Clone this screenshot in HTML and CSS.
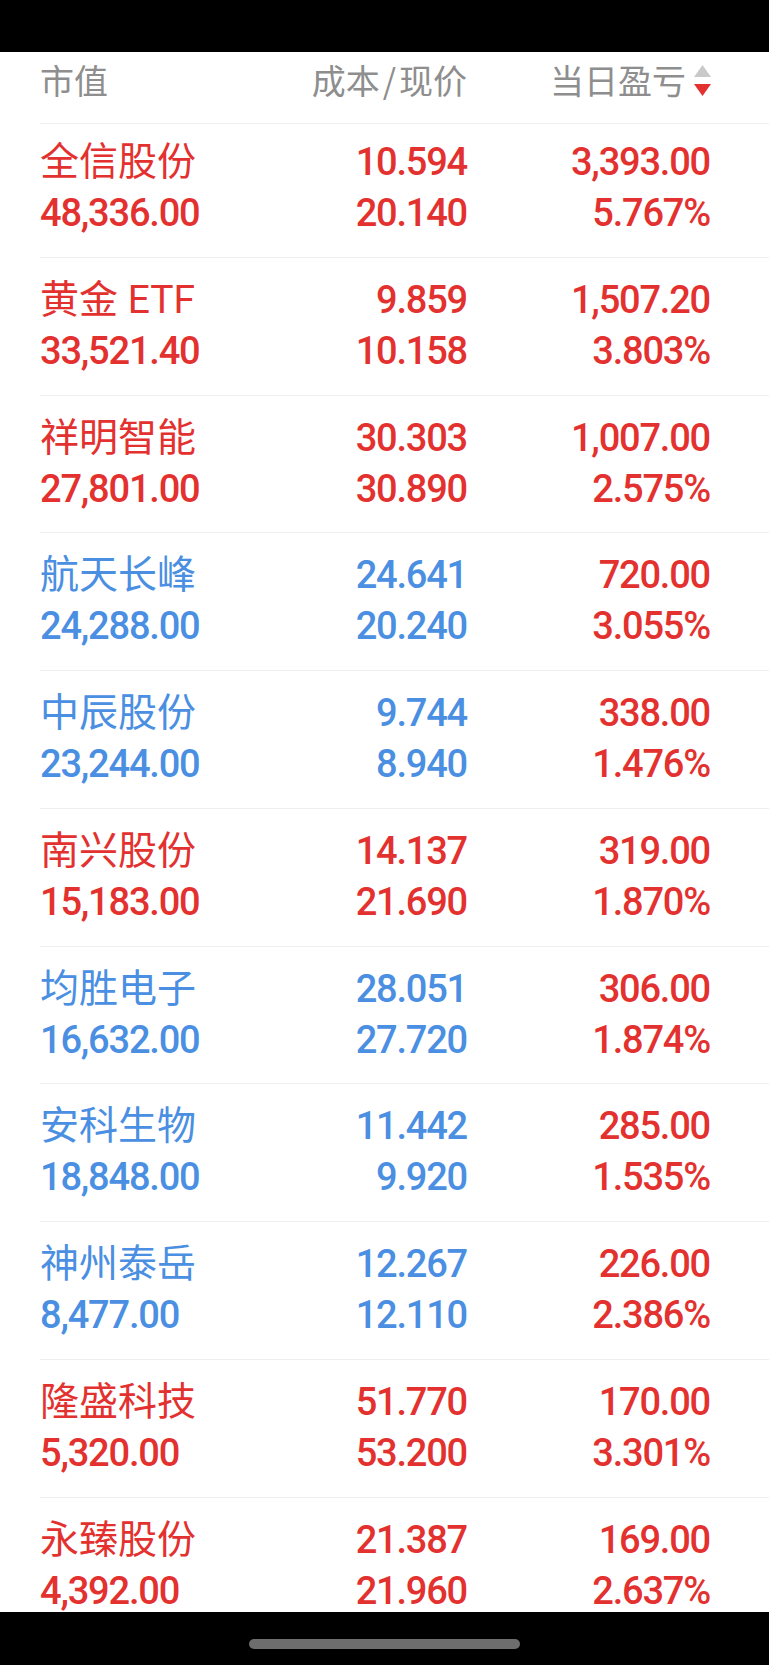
FILE: index.html
```html
<!DOCTYPE html>
<html lang="zh-CN">
<head>
    <meta charset="utf-8">
    <title>持仓</title>
    <link rel="stylesheet" href="styles.css">
</head>
<body>

    <div class="status"></div>

    <main class="screen">

        <div class="head">
            <div class="cell">市值</div>
            <div class="cell right">成本<span class="slash">/</span>现价</div>
            <div class="cell right">
                当日盈亏
                <svg class="sort" width="17" height="31" viewBox="0 0 17 31">
                    <polygon points="8.5,0 17,12 0,12" fill="#c9c9c9"/>
                    <polygon points="0,19 17,19 8.5,31" fill="#e3312f"/>
                </svg>
            </div>
        </div>

        <div class="stock up">
            <div class="cell"><div class="name">全信股份</div><div class="num">48,336.00</div></div>
            <div class="cell right"><div class="num">10.594</div><div class="num">20.140</div></div>
            <div class="cell right pnl"><div class="num">3,393.00</div><div class="num">5.767%</div></div>
        </div>

        <div class="stock up">
            <div class="cell"><div class="name">黄金 ETF</div><div class="num">33,521.40</div></div>
            <div class="cell right"><div class="num">9.859</div><div class="num">10.158</div></div>
            <div class="cell right pnl"><div class="num">1,507.20</div><div class="num">3.803%</div></div>
        </div>

        <div class="stock up">
            <div class="cell"><div class="name">祥明智能</div><div class="num">27,801.00</div></div>
            <div class="cell right"><div class="num">30.303</div><div class="num">30.890</div></div>
            <div class="cell right pnl"><div class="num">1,007.00</div><div class="num">2.575%</div></div>
        </div>

        <div class="stock down">
            <div class="cell"><div class="name">航天长峰</div><div class="num">24,288.00</div></div>
            <div class="cell right"><div class="num">24.641</div><div class="num">20.240</div></div>
            <div class="cell right pnl"><div class="num">720.00</div><div class="num">3.055%</div></div>
        </div>

        <div class="stock down">
            <div class="cell"><div class="name">中辰股份</div><div class="num">23,244.00</div></div>
            <div class="cell right"><div class="num">9.744</div><div class="num">8.940</div></div>
            <div class="cell right pnl"><div class="num">338.00</div><div class="num">1.476%</div></div>
        </div>

        <div class="stock up">
            <div class="cell"><div class="name">南兴股份</div><div class="num">15,183.00</div></div>
            <div class="cell right"><div class="num">14.137</div><div class="num">21.690</div></div>
            <div class="cell right pnl"><div class="num">319.00</div><div class="num">1.870%</div></div>
        </div>

        <div class="stock down">
            <div class="cell"><div class="name">均胜电子</div><div class="num">16,632.00</div></div>
            <div class="cell right"><div class="num">28.051</div><div class="num">27.720</div></div>
            <div class="cell right pnl"><div class="num">306.00</div><div class="num">1.874%</div></div>
        </div>

        <div class="stock down">
            <div class="cell"><div class="name">安科生物</div><div class="num">18,848.00</div></div>
            <div class="cell right"><div class="num">11.442</div><div class="num">9.920</div></div>
            <div class="cell right pnl"><div class="num">285.00</div><div class="num">1.535%</div></div>
        </div>

        <div class="stock down">
            <div class="cell"><div class="name">神州泰岳</div><div class="num">8,477.00</div></div>
            <div class="cell right"><div class="num">12.267</div><div class="num">12.110</div></div>
            <div class="cell right pnl"><div class="num">226.00</div><div class="num">2.386%</div></div>
        </div>

        <div class="stock up">
            <div class="cell"><div class="name">隆盛科技</div><div class="num">5,320.00</div></div>
            <div class="cell right"><div class="num">51.770</div><div class="num">53.200</div></div>
            <div class="cell right pnl"><div class="num">170.00</div><div class="num">3.301%</div></div>
        </div>

        <div class="stock up">
            <div class="cell"><div class="name">永臻股份</div><div class="num">4,392.00</div></div>
            <div class="cell right"><div class="num">21.387</div><div class="num">21.960</div></div>
            <div class="cell right pnl"><div class="num">169.00</div><div class="num">2.637%</div></div>
        </div>

    </main>

    <div class="home">
        <div class="home-bar"></div>
    </div>

</body>
</html>
```

FILE: styles.css
```css
html, body {
    height: 100%;
    margin: 0;
}
body {
    display: flex;
    flex-direction: column;
    background: #fff;
    font-family: Roboto, "Noto Sans CJK SC", sans-serif;
}
/* system bars */
.status {
    flex: none;
    height: 52px;
    background: #000;
}
.home {
    flex: none;
    display: flex;
    justify-content: center;
    box-sizing: border-box;
    height: 53px;
    padding-top: 27px;
    background: #000;
}
.home-bar {
    width: 271px;
    height: 10px;
    border-radius: 5px;
    background: #6d6d6d;
}
.screen {
    flex: 1;
    overflow: hidden;
}
/* table */
.head, .stock {
    display: grid;
    grid-template-columns: 1fr 227px 243px;
    margin-left: 40px;
    padding-right: 59px;
    border-bottom: 1px solid #efefef;
}
.head {
    padding-top: 8px;
    padding-bottom: 23px;
    font-family: "Noto Sans CJK SC", sans-serif;
    font-size: 34px;
    line-height: 40px;
    color: #8e8e8e;
}
.head .cell {
    display: flex;
    align-items: center;
}
.head .right {
    justify-content: flex-end;
}
.slash {
    margin: 0 3px;
}
.sort {
    margin-left: 8px;
    margin-right: -1px;
}
.stock {
    padding-top: 17px;
    padding-bottom: 17.75px;
}
.head + .stock {
    padding-top: 13px;
}
.cell.right {
    text-align: right;
}
.name {
    font-size: 39px;
    line-height: 51px;
    font-weight: 400;
}
.num {
    font-size: 38px;
    line-height: 51px;
    font-weight: 500;
    letter-spacing: -1.2px;
}
.up .cell {
    color: #e3312f;
}
.down .cell {
    color: #4a8fe2;
}
.stock .pnl {
    color: #e3312f;
}
```
